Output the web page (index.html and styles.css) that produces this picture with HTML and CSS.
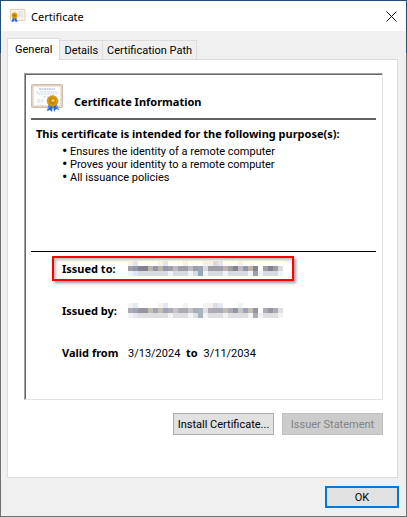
FILE: index.html
```html
<!DOCTYPE html>
<html lang="en">
<head>
  <meta charset="UTF-8" />
  <meta name="viewport" content="width=device-width, initial-scale=1.0" />
  <title>Certificate</title>
  <link rel="stylesheet" href="styles.css">
</head>
<body>
  <main class="dialog">
    <header class="titlebar">
      <svg class="title-icon" viewBox="0 0 16 14" aria-hidden="true">
        <rect x="0.5" y="0.5" width="14.5" height="11" fill="#f8f2e8" stroke="#e2d3bd" />
        <path d="M8 3h5M8 5h4M8 7h5" stroke="#d3dcea" />
        <path d="M3 8l-1.5 5 2.5-.5.5-3zM6 8l1.5 5-2.5-.5-.5-3z" fill="#2468d8" />
        <circle cx="4.5" cy="6.5" r="2.9" fill="#d99b08" />
        <circle cx="4.5" cy="6.5" r="1.2" fill="#a87508" />
      </svg>
      <h1>Certificate</h1>
      <button class="close" type="button" aria-label="Close">
        <svg viewBox="0 0 11 11" aria-hidden="true"><path d="M.5 .5l10 10M10.5 .5l-10 10" stroke="#111" fill="none" /></svg>
      </button>
    </header>

    <div class="tabs" role="tablist">
      <button class="tab active" type="button" role="tab" aria-selected="true">General</button>
      <button class="tab" type="button" role="tab">Details</button>
      <button class="tab" type="button" role="tab">Certification Path</button>
    </div>

    <section class="page" role="tabpanel">
      <div class="info">
        <div class="info-head">
          <svg class="cert-icon" viewBox="0 0 32 28" aria-hidden="true">
            <rect x="0.5" y="0.5" width="31" height="23" rx="1" fill="#e0d5c6" stroke="#cbbda9" />
            <rect x="2.5" y="2.5" width="27" height="19" fill="#fdfdfb" stroke="#ece4d8" />
            <path d="M8 5h16" stroke="#b9c8e2" stroke-width="1.4" stroke-dasharray="2 .5" />
            <path d="M5 8h22M6 10h20M12 13h9M6 16h8M6 18h6" stroke="#c9d3e6" stroke-width="0.9" stroke-dasharray="3 .7" />
            <path d="M18 19l-2 8 3-1 2 2 1-7zM25 19l3 7-3-1-2 3-1-7z" fill="#2468d8" />
            <path d="M18.5 21l-1 4M25 21l1.5 4" stroke="#67a4f5" />
            <circle cx="21.5" cy="17" r="5.3" fill="#d89a0b" stroke="#c28510" stroke-dasharray="1.5 .7" />
            <circle cx="21.5" cy="17" r="3.2" fill="#c07f05" />
            <circle cx="22" cy="16.5" r="1.8" fill="#f4c84a" />
          </svg>
          <h2>Certificate Information</h2>
        </div>
        <div class="purposes">
          <h3>This certificate is intended for the following purpose(s):</h3>
          <ul>
            <li>Ensures the identity of a remote computer</li>
            <li>Proves your identity to a remote computer</li>
            <li>All issuance policies</li>
          </ul>
        </div>
        <dl class="fields">
          <div class="field highlight">
            <dt>Issued to:</dt>
            <dd><svg class="mosaic" role="img" aria-label="Hidden name"></svg></dd>
          </div>
          <div class="field">
            <dt>Issued by:</dt>
            <dd><svg class="mosaic faded" role="img" aria-label="Hidden name"></svg></dd>
          </div>
          <div class="field">
            <dt>Valid from</dt>
            <dd>3/13/2024 <b>to</b> 3/11/2034</dd>
          </div>
        </dl>
      </div>
      <div class="actions">
        <button class="btn" type="button">Install Certificate...</button>
        <button class="btn" type="button" disabled>Issuer Statement</button>
      </div>
    </section>

    <footer class="footer">
      <button class="btn ok" type="button">OK</button>
    </footer>
  </main>

  <script>
    // pixelated names, one colour per cell
    const rows = [
      "ghffffghfffgfffggehfffgffffffff",
      "bcaatctcbdbbdbkebbbtbadctafbabe",
      "gheeeeeegeeegekgeeegeeeegbgeeeg"
    ];
    const shades = {
      a: "#85838f", b: "#9f9da6", c: "#9195ad", t: "#bcb4a6", k: "#98a7b3",
      d: "#bdbac2", e: "#dadade", f: "#ffffff", g: "#f3f1f1", h: "#dfe5f2"
    };

    document.querySelectorAll('.mosaic').forEach(svg => {
      svg.setAttribute('viewBox', `0 0 ${rows[0].length} 3`);
      svg.setAttribute('preserveAspectRatio', 'none');
      svg.setAttribute('shape-rendering', 'crispEdges');
      svg.innerHTML = rows.map((row, y) => [...row].map((c, x) =>
        `<rect x="${x}" y="${y}" width="1" height="1" fill="${shades[c]}" />`).join('')).join('');
    });
  </script>
</body>
</html>
```
FILE: styles.css
```css
* {
  box-sizing: border-box;
}

body {
  margin: 0;
  font: 11px/13px Roboto, sans-serif;
  color: #000;
}

h1, h2, h3, ul, dl, dd {
  margin: 0;
  padding: 0;
}

button {
  font: inherit;
  color: inherit;
}

.dialog {
  display: flex;
  flex-direction: column;
  min-height: 100vh;
  border: 1px solid;
  border-image: linear-gradient(#1f4f78 53px, #707070 53px) 1;
  background: #f0f0f0;
}

.titlebar {
  display: flex;
  align-items: center;
  height: 30px;
  padding: 0 9px;
  background: #fff;
}

.title-icon {
  width: 16px;
  height: 14px;
}

.titlebar h1 {
  flex: 1;
  margin-left: 5px;
  font: 11px/13px "Noto Sans", sans-serif;
}

.close {
  display: flex;
  padding: 0;
  border: none;
  background: none;
}

.close svg {
  width: 11px;
  height: 11px;
}

.tabs {
  display: flex;
  align-items: flex-end;
  margin: 7px 8px 0 6px;
}

.tab {
  height: 19px;
  padding: 0 4px;
  border: 1px solid #dcdcdc;
  border-bottom: none;
  border-left: none;
  background: #f0f0f0;
}

.tab.active {
  height: 22px;
  margin-bottom: -1px;
  padding: 0 7px;
  border-left: 1px solid #dcdcdc;
  background: #fff;
  z-index: 1;
}

.page {
  flex: 1;
  margin: 0 8px 0 6px;
  padding: 13px 14px 0 16px;
  border: 1px solid #dcdcdc;
  background: #fff;
}

.info {
  padding: 10px 6px 0;
  min-height: 327px;
  border: 1px solid;
  border-color: #a0a0a0 #e3e3e3 #e3e3e3 #a0a0a0;
  box-shadow: inset 1px 1px #696969;
}

.info-head {
  display: flex;
  align-items: flex-start;
  height: 36px;
  border-bottom: 2px solid #606060;
}

.cert-icon {
  width: 32px;
  height: 28px;
}

.info-head h2 {
  margin: 11px 0 0 11px;
}

.info h2,
.info h3,
.info dt,
.info b {
  font: bold 11px/13px "Noto Sans", sans-serif;
}

.purposes {
  height: 132px;
  padding: 7px 5px 0;
  border-bottom: 1px solid #000;
}

.purposes ul {
  margin-top: 5px;
  padding-left: 26px;
}

.purposes li {
  list-style: none;
}

.purposes li::before {
  content: "•";
  display: inline-block;
  width: 8px;
  font-size: 16px;
  line-height: 0;
  vertical-align: -1px;
}

.fields {
  display: flex;
  flex-direction: column;
  gap: 17px;
  padding: 4px 0 0 21px;
}

.field {
  display: flex;
  align-items: center;
  width: 242px;
  height: 25px;
  padding-left: 10px;
}

.field dt {
  width: 66px;
  white-space: nowrap;
}

.field b {
  margin: 0 3px;
}

.highlight {
  box-shadow: inset 0 0 0 2px #f00, inset 4px 4px 3px #bbb, 2px 2px 3px #999;
}

.mosaic {
  display: block;
  width: 155px;
  height: 15px;
}

.mosaic.faded {
  opacity: 0.85;
}

.actions {
  display: flex;
  justify-content: flex-end;
  gap: 8px;
  padding-top: 13px;
}

.btn {
  width: 101px;
  height: 22px;
  padding: 0;
  border: 1px solid #adadad;
  background: #e1e1e1;
  white-space: nowrap;
}

.btn:disabled {
  border-color: #bfbfbf;
  background: #ccc;
  color: #838383;
}

.footer {
  display: flex;
  justify-content: flex-end;
  padding: 8px 7px;
}

.btn.ok {
  width: 74px;
  border: 2px solid #0078d7;
}
```
